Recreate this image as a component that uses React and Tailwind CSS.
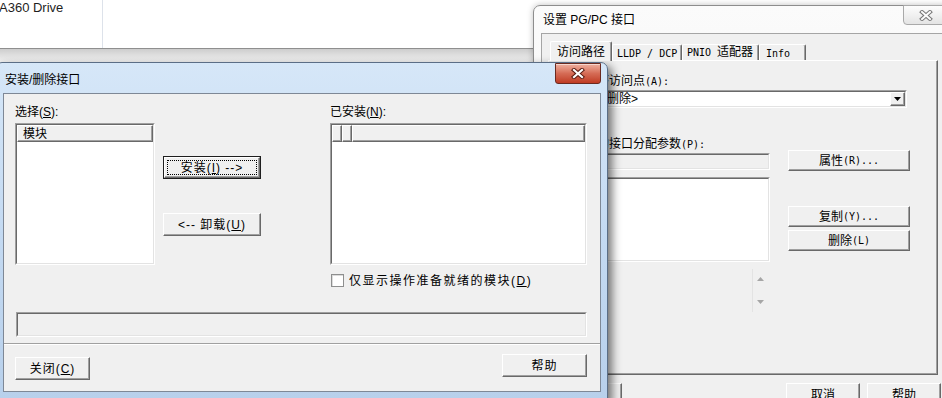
import React from 'react';

const SANS = "font-['Liberation_Sans','Noto_Sans_CJK_SC',sans-serif]";

function M({ children }) {
  return <span className="font-['DejaVu_Sans_Mono','Liberation_Mono',monospace] text-[10px]">{children}</span>;
}

function Raised({ className = '', children }) {
  return (
    <div className={`flex items-center justify-center bg-[#f0f0f0] border border-t-white border-l-white border-r-[#696969] border-b-[#696969] shadow-[inset_-1px_-1px_0_#a0a0a0] text-[12px] leading-[14px] text-black ${className}`}>
      {children}
    </div>
  );
}

function Sunken({ className = '', inner = 'bg-white', children }) {
  return (
    <div className={`border border-t-[#a0a0a0] border-l-[#a0a0a0] border-r-white border-b-white ${className}`}>
      <div className={`relative h-full border border-t-[#696969] border-l-[#696969] border-r-[#e3e3e3] border-b-[#e3e3e3] ${inner}`}>
        {children}
      </div>
    </div>
  );
}

function BackWindow() {
  return (
    <div className="absolute left-[533px] top-[5px] w-[420px] h-[400px] rounded-tl-[7px] border border-[#8d8d8d] bg-linear-to-b from-[#fbfbfb] to-[#ededed] shadow-[0_0_6px_rgba(0,0,0,0.25)]">
      <div className="relative h-[27px]">
        <div className="absolute left-[9px] top-[7px] text-[12px] leading-[14px] text-black">设置 PG/PC 接口</div>
        <div className="absolute left-[369px] top-[-1px] w-[46px] h-[20px] rounded-b-[4px] border border-[#a9a9a9] bg-linear-to-b from-[#fdfdfd] to-[#e4e4e4] flex items-center justify-center">
          <svg width="14" height="11" viewBox="0 0 14 11">
            <path d="M3 2 L11 9 M11 2 L3 9" stroke="#777" strokeWidth="4" strokeLinecap="square" />
            <path d="M3 2 L11 9 M11 2 L3 9" stroke="#fbfbfb" strokeWidth="2" strokeLinecap="square" />
          </svg>
        </div>
      </div>

      <div className="ml-[7px] h-[380px] border border-[#a5a5a5] bg-[#f0f0f0]">
        {/* tabs */}
        <div className="flex items-end h-[26px] pl-[8px]">
          <div className="relative z-10 -mb-px h-[20px] w-[62px] pt-[2px] pl-[6px] bg-[#f0f0f0] rounded-t-[2px] border-l border-t border-white border-r border-r-[#696969] shadow-[inset_-1px_0_0_#a0a0a0] text-[12px] leading-[16px]">访问路径</div>
          <div className="h-[16px] w-[70px] pl-[4px] rounded-t-[2px] border-l border-t border-white border-r border-r-[#696969] shadow-[inset_-1px_0_0_#a0a0a0] leading-[14px]"><M>LLDP / DCP</M></div>
          <div className="h-[16px] w-[77px] pl-[4px] rounded-t-[2px] border-l border-t border-white border-r border-r-[#696969] shadow-[inset_-1px_0_0_#a0a0a0] text-[12px] leading-[14px]"><M>PNIO </M>适配器</div>
          <div className="h-[16px] w-[47px] pl-[6px] rounded-t-[2px] border-l border-t border-white border-r border-r-[#696969] shadow-[inset_-1px_0_0_#a0a0a0] leading-[14px]"><M>Info</M></div>
        </div>

        {/* panel */}
        <div className="ml-[6px] w-[390px] h-[315px] border border-t-white border-l-white border-r-[#696969] border-b-[#696969] shadow-[inset_-1px_-1px_0_#a0a0a0] pt-[12px] pl-[12px] text-[12px] leading-[16px]">
          <div className="h-[16px]">应用程序访问点<M>(A):</M></div>
          <Sunken className="mt-px w-[346px] h-[18px]">
            <div className="pl-[37px] leading-[14px]">{'<删除>'}</div>
            <Raised className="absolute right-0 top-0 w-[15px] h-[14px]">
              <svg width="7" height="4" viewBox="0 0 7 4"><path d="M0 0 H7 L3.5 4 Z" fill="#000" /></svg>
            </Raised>
          </Sunken>

          <div className="flex mt-[28px]">
            <div className="w-[209px]">
              <div className="h-[16px]">为使用的接口分配参数<M>(P):</M></div>
              <Sunken className="mt-px h-[17px]" inner="bg-[#f0f0f0]" />
              <Sunken className="mt-[7px] h-[85px]" />
              <div className="mt-[7px] ml-[191px] w-[16px] h-[43px] border-l border-[#e3e3e3] bg-[#f0f0f0] flex flex-col items-center justify-between py-[8px]">
                <svg width="7" height="4" viewBox="0 0 7 4"><path d="M0 4 H7 L3.5 0 Z" fill="#a6a6a6" /></svg>
                <svg width="7" height="4" viewBox="0 0 7 4"><path d="M0 0 H7 L3.5 4 Z" fill="#a6a6a6" /></svg>
              </div>
            </div>
            <div className="ml-[18px] w-[122px]">
              <Raised className="mt-[14px] h-[21px]">属性<M>(R)...</M></Raised>
              <Raised className="mt-[35px] h-[21px]">复制<M>(Y)...</M></Raised>
              <Raised className="mt-[3px] h-[21px]">删除<M>(L)</M></Raised>
            </div>
          </div>
        </div>

        <div className="flex mt-[8px]">
          <Raised className="ml-[5px] w-[75px] h-[23px] items-start pt-[4px]">确定</Raised>
          <Raised className="ml-[164px] w-[74px] h-[23px] items-start pt-[4px]">取消</Raised>
          <Raised className="ml-[7px] w-[74px] h-[23px] items-start pt-[4px]">帮助</Raised>
        </div>
      </div>
    </div>
  );
}

function FrontDialog() {
  return (
    <div className="absolute left-[-5px] top-[62px] w-[613px] h-[340px] rounded-t-[7px] border border-[#5b6e86] bg-linear-to-b from-[#d6e7f8] via-[#c4daf2] to-[#b8d0eb] shadow-[4px_4px_10px_rgba(0,0,0,0.55)]">
      <div className="relative h-[30px]">
        <div className="absolute left-[9px] top-[9px] text-[12px] leading-[16px] text-black">安装/删除接口</div>
        <div className="absolute left-[559px] top-0 w-[46px] h-[21px] rounded-[3px] rounded-t-none border border-[#6b2a20] bg-linear-to-b from-[#eeb0a0] via-[#d56b55] to-[#bf3a22] shadow-[inset_0_1px_0_rgba(255,255,255,0.5)] flex items-center justify-center">
          <svg width="14" height="11" viewBox="0 0 14 11">
            <path d="M3 2 L11 9 M11 2 L3 9" stroke="#5a1c12" strokeWidth="4.2" strokeLinecap="square" />
            <path d="M3 2 L11 9 M11 2 L3 9" stroke="#fff" strokeWidth="2.2" strokeLinecap="square" />
          </svg>
        </div>
      </div>

      <div className="ml-[7px] w-[598px] h-[299px] border border-[#7e8896] bg-[#f0f0f0] text-[12px] leading-[16px] text-black">
        <div className="flex pt-[10px] pl-[11px]">
          <div className="w-[140px]">
            <div className="h-[16px]">选择(<u>S</u>):</div>
            <Sunken className="mt-[3px] h-[142px]">
              <Raised className="h-[17px] justify-start pl-[5px]">模块</Raised>
            </Sunken>
          </div>

          <div className="ml-[8px] w-[98px]">
            <div className="mt-[52px] h-[23px] border border-[#1e1e1e]">
              <div className="h-full p-[2px] bg-[#f0f0f0] border border-t-white border-l-white border-r-[#696969] border-b-[#696969] shadow-[inset_-1px_-1px_0_#a0a0a0]">
                <div className="h-full border border-dotted border-black flex items-center justify-center tracking-[1px] leading-[14px]">安装(<u>I</u>) {'-->'}</div>
              </div>
            </div>
            <Raised className="mt-[34px] h-[23px] tracking-[1px]">{'<--'} 卸载(<u>U</u>)</Raised>
          </div>

          <div className="ml-[69px] w-[257px]">
            <div className="h-[16px]">已安装(<u>N</u>):</div>
            <Sunken className="mt-[3px] h-[142px]">
              <div className="flex h-[17px]">
                <Raised className="w-[10px] h-full" />
                <Raised className="w-[10px] h-full" />
                <Raised className="flex-1 h-full" />
              </div>
            </Sunken>
            <div className="mt-[9px] flex items-center h-[13px]">
              <div className="ml-px w-[13px] h-[13px] border border-[#8e8f8f] bg-white shadow-[inset_1px_1px_0_#dcdcdc]" />
              <div className="ml-[5px] tracking-[1.5px]">仅显示操作准备就绪的模块(<u>D</u>)</div>
            </div>
          </div>
        </div>

        <Sunken className="mt-[25px] ml-[12px] w-[571px] h-[25px]" inner="bg-[#f0f0f0]" />

        <div className="mt-[6px] h-[2px] border-t border-[#a0a0a0] border-b border-b-white" />

        <div className="mt-[9px] flex items-start justify-between pl-[11px] pr-[13px]">
          <Raised className="mt-[3px] w-[75px] h-[23px] tracking-[1px]">关闭(<u>C</u>)</Raised>
          <Raised className="w-[85px] h-[23px] tracking-[1px]">帮助</Raised>
        </div>
      </div>
    </div>
  );
}

export default function App() {
  return (
    <div className={`relative w-[942px] h-[398px] overflow-hidden bg-white ${SANS}`}>
      <div className="absolute left-0 top-0 w-[533px]">
        <div className="flex h-[48px]">
          <div className="w-[104px] border-r border-[#dde2ea] -ml-px text-[13px] leading-[15px] text-[#1e1e1e]">A360 Drive</div>
        </div>
        <div className="h-px bg-[#8f8f8f]" />
        <div className="h-[13px] bg-linear-to-b from-[#cdcdcd] to-[#f3f3f3]" />
      </div>
      <BackWindow />
      <FrontDialog />
    </div>
  );
}
